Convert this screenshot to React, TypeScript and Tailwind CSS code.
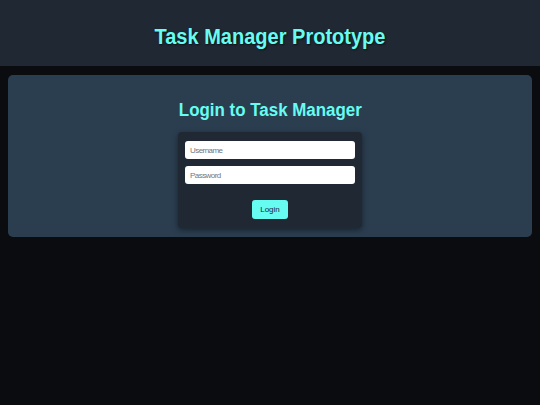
import React from "react";

export default function App() {
  return (
    <div className="min-h-[405px] bg-[#0b0c10] font-['Liberation_Sans',Arial,sans-serif]">
      <header className="h-[66px] bg-[#1f2833] flex items-center justify-center pt-[8px]">
        <h1 className="inline-block scale-x-[0.91] text-[22px] leading-[26px] font-bold text-[#66fcf1] [text-shadow:1px_1px_2px_rgba(0,0,0,0.6)]">
          Task Manager Prototype
        </h1>
      </header>
      <main className="px-2 pt-[9px]">
        <div className="bg-[#2b3e50] rounded-[5px] pt-[23px] pb-[9px] px-4 flex flex-col items-center">
          <h2 className="inline-block scale-x-[0.94] text-[18px] font-bold text-[#66fcf1] leading-[24px]">
            Login to Task Manager
          </h2>
          <form className="mt-[10px] w-[184px] bg-[#1f2833] rounded-[4px] shadow-[0_2px_6px_rgba(0,0,0,0.45)] px-[7px] pt-[9px] pb-[9px] flex flex-col items-center">
            <input
              type="text"
              placeholder="Username"
              className="w-full h-[18px] bg-white rounded-[3px] px-[5px] text-[8px] tracking-[-0.55px] text-gray-800 placeholder:text-[#767676] outline-none"
            />
            <input
              type="password"
              placeholder="Password"
              className="mt-[7px] w-full h-[18px] bg-white rounded-[3px] px-[5px] text-[8px] tracking-[-0.55px] text-gray-800 placeholder:text-[#767676] outline-none"
            />
            <button
              type="button"
              className="mt-[16px] w-[36px] h-[19px] bg-[#66fcf1] rounded-[3px] text-[8px] text-[#1f2833]"
            >
              Login
            </button>
          </form>
        </div>
      </main>
    </div>
  );
}
